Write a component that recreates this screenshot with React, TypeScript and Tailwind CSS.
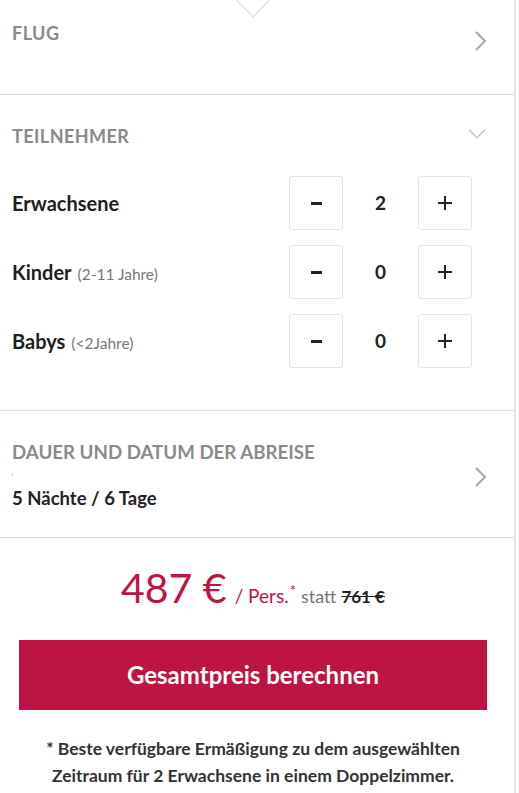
import { ChevronDown } from 'lucide-react'

const font = { fontFamily: 'Lato, "Open Sans", sans-serif' }

function Chevron() {
  return (
    <svg width="14" height="22" viewBox="0 0 14 22" className="text-[#aaa]">
      <path d="M2 2l9 9-9 9" fill="none" stroke="currentColor" strokeWidth="2.2" />
    </svg>
  )
}

function Counter({ value }: { value: number }) {
  return (
    <div className="flex items-center">
      <button className="w-[54px] h-[54px] border border-[#e3e3e3] rounded-[3px] flex items-center justify-center">
        <span className="block w-[11px] h-[3px] bg-[#222]" />
      </button>
      <div className="w-[75px] text-center text-[19px] font-bold text-[#222]">{value}</div>
      <button className="w-[54px] h-[54px] border border-[#e3e3e3] rounded-[3px] flex items-center justify-center text-[#222]">
        <svg width="16" height="16" viewBox="0 0 16 16">
          <path d="M8 1v14M1 8h14" stroke="currentColor" strokeWidth="2" />
        </svg>
      </button>
    </div>
  )
}

function PersonRow({ label, hint, value }: { label: string; hint?: string; value: number }) {
  return (
    <div className="flex items-center justify-between pl-3 pr-[42px]">
      <div className="text-[20px] font-bold text-[#1e1e1e]">
        {label}
        {hint && <span className="text-[15.5px] font-normal text-[#777] ml-[6px]">{hint}</span>}
      </div>
      <Counter value={value} />
    </div>
  )
}

export default function App() {
  return (
    <div className="w-[519px] h-[793px] bg-white overflow-hidden" style={font}>
      <div className="w-[516px] border-r-2 border-[#e6e6e6] min-h-[793px]">
        {/* Flug */}
        <div className="relative h-[95px] border-b border-[#dcdcdc]">
          <div className="absolute left-[241px] -top-[11px] w-[24px] h-[24px] rotate-45 border-r-2 border-b-2 border-[#e8e8e8]" />
          <div className="flex justify-between pl-3 pr-[26px] pt-[20px]">
            <span className="text-[18px] font-bold text-[#8a8a8a] tracking-wide">FLUG</span>
            <div className="mt-[10px]"><Chevron /></div>
          </div>
        </div>

        {/* Teilnehmer */}
        <div className="border-b border-[#dcdcdc] pb-[42px]">
          <div className="flex justify-between pl-3 pr-[22px] pt-[28px]">
            <span className="text-[18px] font-bold text-[#8a8a8a] tracking-wide">TEILNEHMER</span>
            <ChevronDown className="w-[30px] h-[30px] text-[#c8c8c8] -mt-[4px]" strokeWidth={1.4} />
          </div>
          <div className="flex flex-col gap-[15px] mt-[26px]">
            <PersonRow label="Erwachsene" value={2} />
            <PersonRow label="Kinder" hint="(2-11 Jahre)" value={0} />
            <PersonRow label="Babys" hint="(<2Jahre)" value={0} />
          </div>
        </div>

        {/* Dauer */}
        <div className="border-b border-[#dcdcdc] h-[127px] flex items-center justify-between pl-3 pr-[26px]">
          <div className="pt-[2px]">
            <div className="text-[18.7px] font-bold text-[#8a8a8a]">DAUER UND DATUM DER ABREISE</div>
            <div className="w-[1px] h-[3px] bg-[#ccc] mt-[7px]" />
            <div className="text-[18.5px] font-bold text-[#222] mt-[9px]">5 Nächte / 6 Tage</div>
          </div>
          <div className="mt-[6px]"><Chevron /></div>
        </div>

        {/* Preis */}
        <div className="pt-[19px] flex items-baseline justify-center pr-[8px]">
          <span className="text-[41px] text-[#be1443] mr-[8px]">487 €</span>
          <span className="text-[19px] text-[#be1443]">/ Pers.<sup className="text-[15px] ml-[1px]">*</sup></span>
          <span className="text-[18px] text-[#777] ml-[5px]">statt</span>
          <span className="text-[17px] font-bold text-[#222] line-through ml-[5px]">761 €</span>
        </div>

        <div className="pl-[19px] pr-[27px] mt-[21px]">
          <button className="w-full h-[70px] bg-[#be1443] text-white text-[24px] font-bold">
            Gesamtpreis berechnen
          </button>
        </div>

        <p className="text-center text-[17.5px] font-bold text-[#333] leading-[27px] mt-[25px] pl-6 pr-8">
          * Beste verfügbare Ermäßigung zu dem ausgewählten Zeitraum für 2 Erwachsene in einem Doppelzimmer.
        </p>
      </div>
    </div>
  )
}
